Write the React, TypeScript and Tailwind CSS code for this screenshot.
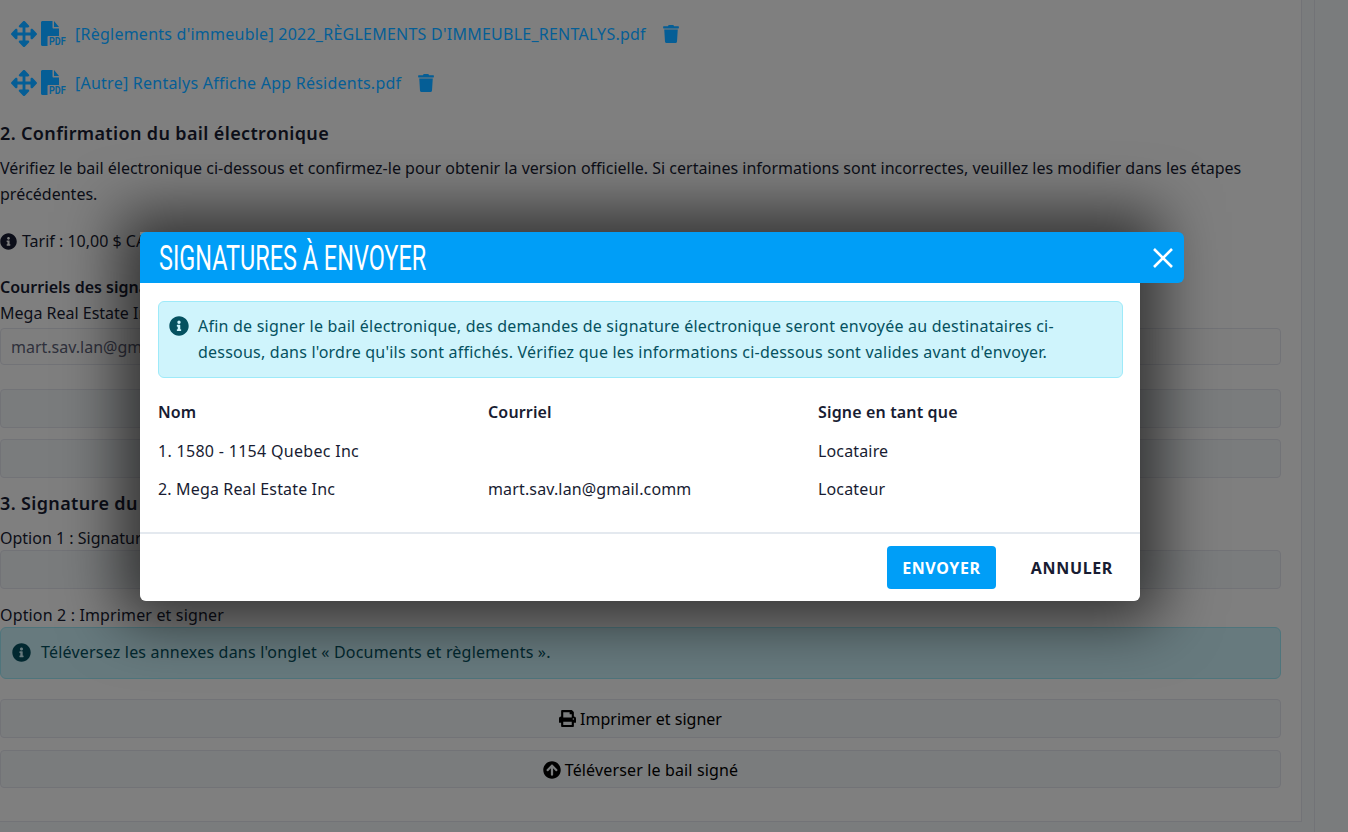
import { FaArrowsAlt, FaTrash, FaInfoCircle, FaPrint, FaArrowCircleUp } from 'react-icons/fa'

function PdfIcon() {
  return (
    <span className="relative block w-[26px] h-[26px]">
      <svg viewBox="0 0 26 26" className="absolute left-0 top-0 w-[26px] h-[26px]" fill="currentColor">
        <path d="M1.500 0H11.500V6.500c0 .6.4 1 1 1H18V15H7.500c-.5 0-1 .5-1 1V25H1.500C.7 25 0 24.300 0 23.500V1.500C0 .7.7 0 1.500 0zM13 0l5 6h-5z" />
      </svg>
      <span className="absolute left-[8px] top-[16px] origin-left scale-x-[0.9] text-[10px] leading-[10px] font-bold font-['Roboto',sans-serif]">PDF</span>
    </span>
  )
}

function FileRow({ name }: { name: string }) {
  return (
    <div className="relative z-10 flex items-center h-[26px] pl-[11px] text-[#055e96]">
      <FaArrowsAlt className="w-[26px] h-[26px]" />
      <span className="ml-[4px]"><PdfIcon /></span>
      <span className="ml-[8px] tracking-[0.24px]">{name}</span>
      <FaTrash className="ml-[17px] w-[16px] h-[18px]" />
    </div>
  )
}

function Bar({ className = '', children }: { className?: string; children?: React.ReactNode }) {
  return (
    <div className={`flex items-center justify-center gap-[4px] rounded border border-[#e4e6ef] bg-[#f5f8fa] ${className}`}>
      {children}
    </div>
  )
}

export default function App() {
  return (
    <div className="relative h-[832px] w-[1348px] overflow-hidden bg-[#f5f8fa] font-['Noto_Sans',sans-serif] text-base leading-[26px] text-[#181c32]">
      {/* page behind the dialog */}
      <div className="absolute inset-y-0 left-[1314px] w-px bg-[#e4e6ef]" />
      <div className="h-[822px] w-[1302px] border-r border-b border-[#e4e6ef] bg-white">
        <div className="w-[1281px]">
          <div className="pt-[21px]">
            <FileRow name="[Règlements d'immeuble] 2022_RÈGLEMENTS D'IMMEUBLE_RENTALYS.pdf" />
          </div>
          <div className="mt-[23px]">
            <FileRow name="[Autre] Rentalys Affiche App Résidents.pdf" />
          </div>

          <h2 className="mt-[24px] text-lg font-semibold leading-[26px] tracking-[0.36px]">2. Confirmation du bail électronique</h2>
          <p className="mt-[9px]">
            Vérifiez le bail électronique ci-dessous et confirmez-le pour obtenir la version officielle. Si certaines informations sont incorrectes, veuillez les modifier dans les étapes précédentes.
          </p>
          <div className="mt-[21px] flex items-center gap-[5px]">
            <FaInfoCircle className="w-[17px] h-[17px]" />
            <span>Tarif : 10,00 $ CAD</span>
          </div>

          <div className="mt-[20px] font-semibold">Courriels des signataires</div>
          <div>Mega Real Estate Inc</div>
          <div className="mt-[2px] flex h-[37px] items-center rounded border border-[#e4e6ef] bg-[#fdfdfd] px-[10px] text-[#5e6278]">mart.sav.lan@gmail.comm</div>
          <Bar className="mt-[24px] h-[39px]" />
          <Bar className="mt-[11px] h-[39px]" />

          <h2 className="mt-[12px] text-lg font-semibold leading-[26px] tracking-[0.36px]">3. Signature du bail</h2>
          <div className="mt-[9px]">Option 1 : Signature électronique</div>
          <Bar className="-mt-px h-[39px]" />

          <div className="mt-[13px] tracking-[0.15px]">Option 2 : Imprimer et signer</div>
          <div className="-mt-px flex h-[52px] items-center gap-[10px] rounded-md border border-[#9eeaf9] bg-[#cff4fc] px-[11px] pb-[2px] text-[#055160]">
            <FaInfoCircle className="w-[19px] h-[19px]" />
            <span className="tracking-[0.2px]">Téléversez les annexes dans l'onglet « Documents et règlements ».</span>
          </div>
          <Bar className="mt-[20px] h-[39px] text-black">
            <FaPrint className="w-[17px] h-[17px]" />
            <span>Imprimer et signer</span>
          </Bar>
          <Bar className="mt-[12px] h-[38px] pt-[2px] text-black">
            <FaArrowCircleUp className="w-[18px] h-[18px]" />
            <span className="tracking-[0.15px]">Téléverser le bail signé</span>
          </Bar>
        </div>
      </div>

      {/* backdrop */}
      <div className="absolute inset-0 bg-black/50" />

      {/* dialog */}
      <div className="absolute left-[140px] top-[232px] z-20 w-[1000px] rounded-b-md shadow-[0_0_60px_20px_rgba(0,0,0,0.6)]">
        <div className="flex h-[51px] w-[1044px] items-center justify-between rounded-t-md rounded-br-md bg-[#009ef7] pl-[19px] pr-[11px] text-white">
          <h1 className="origin-left scale-x-[0.67] whitespace-nowrap pt-[2px] font-['Roboto',sans-serif] text-[35px] leading-[49px] font-normal">SIGNATURES À ENVOYER</h1>
          <svg viewBox="0 0 20 20" className="h-[20px] w-[20px]" fill="none" stroke="currentColor" strokeWidth="2.600">
            <path d="M1 1L19 19M19 1L1 19" />
          </svg>
        </div>
        <div className="rounded-b-md bg-white">
          <div className="pl-[18px] pr-[17px] pt-[18px]">
            <div className="flex gap-[9px] rounded-md border border-[#9eeaf9] bg-[#cff4fc] pt-[11px] pb-[12px] pl-[10px] pr-[40px] text-[#055160]">
              <FaInfoCircle className="mt-[3px] h-[20px] w-[20px] shrink-0" />
              <span className="tracking-[0.22px]">Afin de signer le bail électronique, des demandes de signature électronique seront envoyée au destinataires ci-dessous, dans l'ordre qu'ils sont affichés. Vérifiez que les informations ci-dessous sont valides avant d'envoyer.</span>
            </div>
            <div className="mt-[21px] grid grid-cols-[330px_330px_1fr] tracking-[0.15px] text-[#181c32]">
              <div className="font-semibold">Nom</div>
              <div className="font-semibold">Courriel</div>
              <div className="font-semibold">Signe en tant que</div>
              <div className="mt-[13px] tracking-[0.3px]">1. 1580 - 1154 Quebec Inc</div>
              <div className="mt-[13px]" />
              <div className="mt-[13px]">Locataire</div>
              <div className="mt-[12px]">2. Mega Real Estate Inc</div>
              <div className="mt-[12px]">mart.sav.lan@gmail.comm</div>
              <div className="mt-[12px]">Locateur</div>
            </div>
          </div>
          <div className="mt-[30px] flex items-center justify-end border-t-2 border-[#e4e9ef] py-[12px] pr-[27px] font-bold">
            <div className="flex h-[43px] w-[109px] items-center justify-center rounded bg-[#009ef7] tracking-[0.6px] text-white">ENVOYER</div>
            <div className="ml-[35px] tracking-[0.65px] text-[#181c32]">ANNULER</div>
          </div>
        </div>
      </div>
    </div>
  )
}
